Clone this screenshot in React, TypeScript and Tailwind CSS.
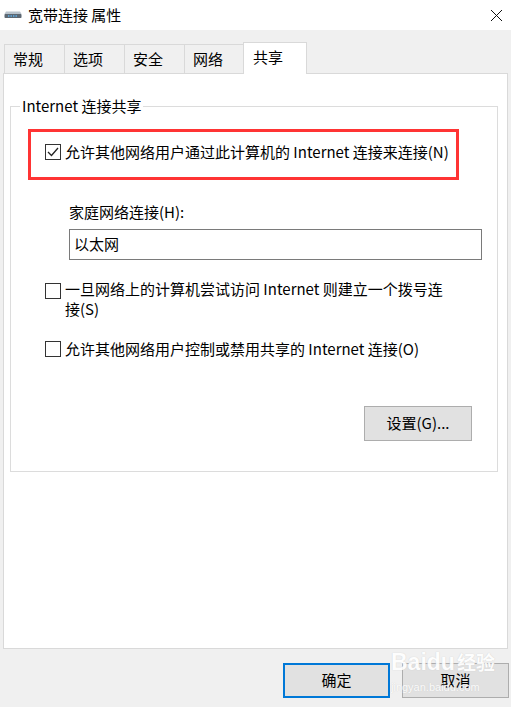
import React from "react";

const FONT = { fontFamily: '"Noto Sans CJK SC", "Noto Sans", sans-serif' };

function Checkbox({ checked }: { checked?: boolean }) {
  return (
    <div className="w-[16px] h-[16px] border border-[#333333] bg-white shrink-0 flex items-center justify-center">
      {checked && (
        <svg width="14" height="14" viewBox="0 0 14 14">
          <polyline points="2,7 5.5,10.5 12,3" fill="none" stroke="#222" strokeWidth="1.3" />
        </svg>
      )}
    </div>
  );
}

function Tab({ label, w }: { label: string; w: string }) {
  return (
    <div className={`${w} h-[29px] border border-[#d9d9d9] border-b-0 -ml-px first:ml-0 flex items-center pl-[8px] text-[15px] text-black bg-[#f0f0f0]`}>
      {label}
    </div>
  );
}

export default function App() {
  return (
    <div className="w-[511px] h-[707px] bg-[#f0f0f0] flex flex-col relative overflow-hidden text-black" style={FONT}>
      {/* Title bar */}
      <div className="h-[30px] bg-white flex items-center shrink-0">
        <svg width="18" height="8" viewBox="0 0 18 8" className="ml-[4px]">
          <path d="M2 0.5 H16 L17.5 3 H0.5 Z" fill="#b9c3cc" />
          <rect x="0.5" y="3" width="17" height="4" rx="0.8" fill="#5d6873" />
          <rect x="4" y="4.3" width="1.4" height="1.4" fill="#5fb7f5" />
          <rect x="6.5" y="4.3" width="1.4" height="1.4" fill="#5fb7f5" />
          <rect x="9" y="4.3" width="1.4" height="1.4" fill="#5fb7f5" />
          <rect x="11.5" y="4.3" width="1.4" height="1.4" fill="#5fb7f5" />
        </svg>
        <span className="ml-[6px] text-[15px] leading-[20px]">宽带连接 属性</span>
        <div className="flex-1" />
        <svg width="13" height="13" viewBox="0 0 13 13" className="mr-[8px]">
          <path d="M1 1 L12 12 M12 1 L1 12" stroke="#111" strokeWidth="1" />
        </svg>
      </div>

      {/* Tabs */}
      <div className="mt-[11px] h-[32px] flex items-end pl-[4px] relative z-10">
        <Tab label="常规" w="w-[61px]" />
        <Tab label="选项" w="w-[61px]" />
        <Tab label="安全" w="w-[61px]" />
        <Tab label="网络" w="w-[60px]" />
        <div className="w-[64px] h-[32px] -ml-px border border-[#d9d9d9] border-b-0 bg-white flex items-center pl-[9px] text-[15px] mb-[-1px] pb-[3px]">
          共享
        </div>
      </div>

      {/* Panel */}
      <div className="mx-[3px] h-[576px] border border-[#d9d9d9] bg-white flex flex-col">
        <fieldset className="mt-[22px] ml-[6px] w-[488px] h-[376px] border border-[#dcdcdc] flex flex-col">
          <legend className="ml-[9px] px-[2px] text-[15px] leading-[20px]">Internet 连接共享</legend>

          <div className="ml-[17px] mt-[13px] w-[431px] h-[51px] border-[3px] border-[#ff3434] pl-[14px] pt-[10px]">
            <div className="h-[20px] flex items-center gap-[4px]">
              <Checkbox checked />
              <span className="text-[15px] leading-[20px] whitespace-nowrap">允许其他网络用户通过此计算机的 Internet 连接来连接(N)</span>
            </div>
          </div>

          <div className="ml-[58px] mt-[22px] text-[15px] leading-[20px]">家庭网络连接(H):</div>
          <div className="ml-[58px] mt-[7px] w-[413px] h-[31px] border border-[#7a7a7a] flex items-center pl-[4px] text-[15px]">
            以太网
          </div>

          <div className="ml-[34px] mt-[19px] flex items-start gap-[4px]">
            <div className="mt-[4px]">
              <Checkbox />
            </div>
            <span className="text-[15px] leading-[20px] whitespace-nowrap">
              一旦网络上的计算机尝试访问 Internet 则建立一个拨号连
              <br />
              接(S)
            </span>
          </div>

          <div className="ml-[34px] mt-[20px] flex items-center gap-[4px] h-[20px]">
            <Checkbox />
            <span className="text-[15px] leading-[20px] whitespace-nowrap">允许其他网络用户控制或禁用共享的 Internet 连接(O)</span>
          </div>

          <div className="self-end mr-[25px] mt-[47px] w-[108px] h-[35px] bg-[#e1e1e1] border border-[#adadad] flex items-center justify-center text-[15px]">
            设置(G)...
          </div>
        </fieldset>
      </div>

      {/* Bottom buttons */}
      <div className="mt-[14px] flex justify-end gap-[12px] pr-[2px]">
        <div className="w-[107px] h-[35px] bg-[#e1e1e1] border-2 border-[#0078d7] flex items-center justify-center text-[15px]">
          确定
        </div>
        <div className="w-[107px] h-[35px] bg-[#e1e1e1] border border-[#adadad] flex items-center justify-center text-[15px]">
          取消
        </div>
      </div>

      {/* Watermark */}
      <div className="absolute left-[391px] top-[648px] flex flex-col items-start pointer-events-none select-none opacity-90">
        <div className="flex items-end text-white text-[23px] font-bold leading-[28px]" style={{ textShadow: "0 0 1px #c4c4c4" }}>
          <span style={{ fontFamily: "Arial, sans-serif" }}>Bai</span>
          <span style={{ fontFamily: "Arial, sans-serif" }}>du</span>
          <span className="ml-[2px] text-[19px]">经验</span>
        </div>
        <div className="mt-[5px] text-white text-[11px] leading-[12px]" style={{ fontFamily: "Arial, sans-serif", textShadow: "0 0 1px #c4c4c4" }}>
          jingyan.baidu.com
        </div>
      </div>
    </div>
  );
}
